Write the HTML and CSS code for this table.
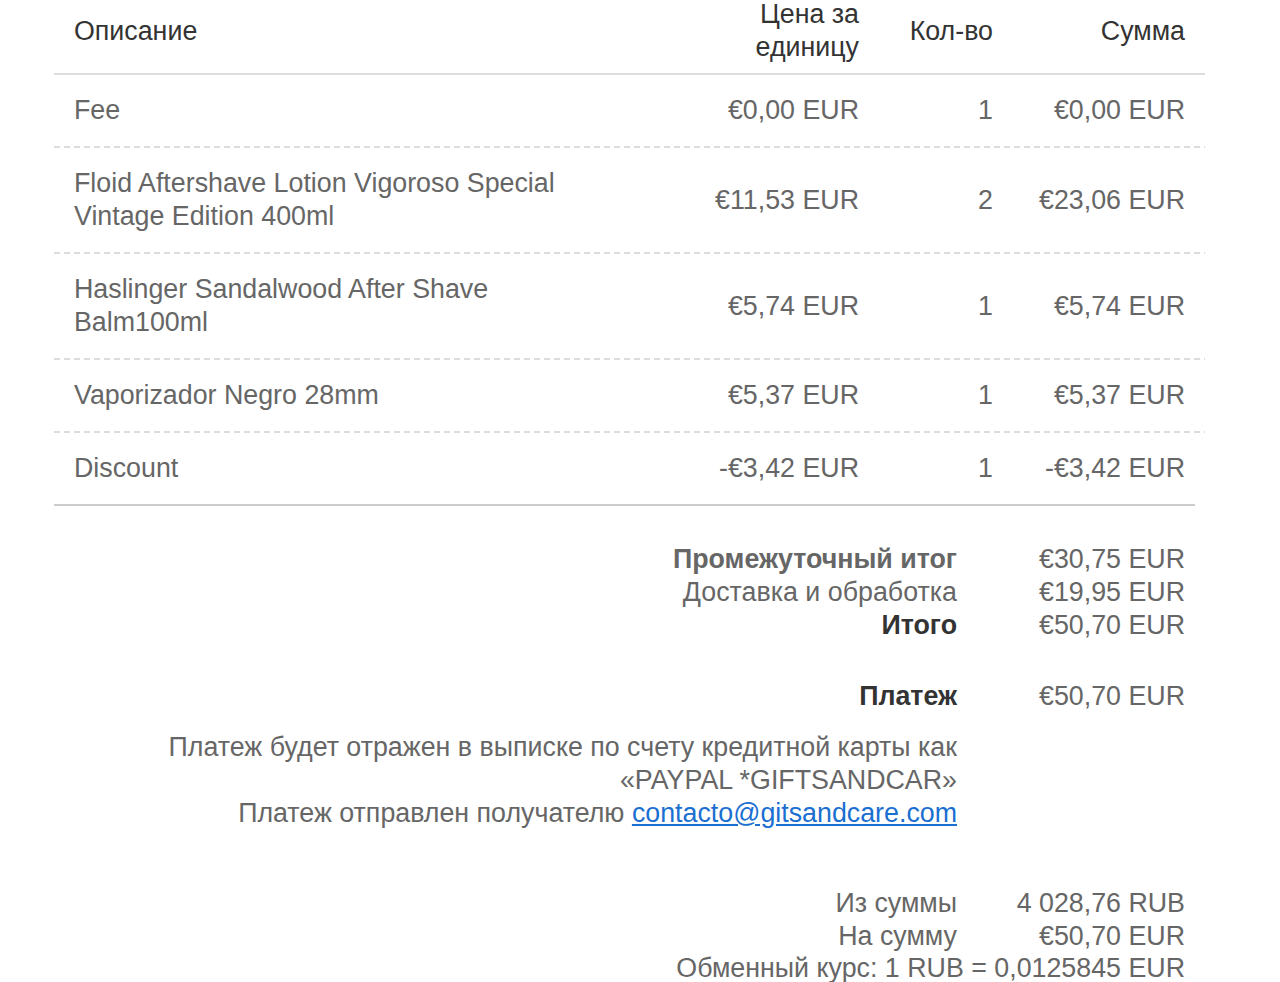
FILE: index.html
```html
<!DOCTYPE html>
<html lang="ru">
<head>
<meta charset="utf-8">
<title>Детали платежа</title>
<link rel="stylesheet" href="styles.css">
</head>
<body>
<div class="invoice">
  <div class="items">
    <div class="row head">
      <div class="c desc">Описание</div>
      <div class="c price">Цена за<br>единицу</div>
      <div class="c qty">Кол-во</div>
      <div class="c sum">Сумма</div>
    </div>
    <div class="row first">
      <div class="c desc">Fee</div>
      <div class="c price">€0,00 EUR</div>
      <div class="c qty">1</div>
      <div class="c sum">€0,00 EUR</div>
    </div>
    <div class="row">
      <div class="c desc">Floid Aftershave Lotion Vigoroso Special Vintage Edition 400ml</div>
      <div class="c price">€11,53 EUR</div>
      <div class="c qty">2</div>
      <div class="c sum">€23,06 EUR</div>
    </div>
    <div class="row">
      <div class="c desc">Haslinger Sandalwood After Shave Balm100ml</div>
      <div class="c price">€5,74 EUR</div>
      <div class="c qty">1</div>
      <div class="c sum">€5,74 EUR</div>
    </div>
    <div class="row">
      <div class="c desc">Vaporizador Negro 28mm</div>
      <div class="c price">€5,37 EUR</div>
      <div class="c qty">1</div>
      <div class="c sum">€5,37 EUR</div>
    </div>
    <div class="row">
      <div class="c desc">Discount</div>
      <div class="c price">-€3,42 EUR</div>
      <div class="c qty">1</div>
      <div class="c sum">-€3,42 EUR</div>
    </div>
  </div>
  <div class="rule"></div>

  <div class="totals">
    <div class="lbl bold-soft">Промежуточный итог</div>
    <div class="val">€30,75 EUR</div>
    <div class="lbl">Доставка и обработка</div>
    <div class="val">€19,95 EUR</div>
    <div class="lbl bold">Итого</div>
    <div class="val">€50,70 EUR</div>

    <div class="lbl bold gap-payment">Платеж</div>
    <div class="val gap-payment">€50,70 EUR</div>

    <div class="note">Платеж будет отражен в выписке по счету кредитной карты как<br>«PAYPAL *GIFTSANDCAR»<br>Платеж отправлен получателю <a href="#" class="mail">contacto@gitsandcare.com</a></div>

    <div class="lbl gap-conv">Из суммы</div>
    <div class="val gap-conv">4 028,76 RUB</div>
    <div class="lbl">На сумму</div>
    <div class="val">€50,70 EUR</div>
    <div class="rate">Обменный курс: 1 RUB = 0,0125845 EUR</div>
  </div>
</div>
</body>
</html>
```

FILE: styles.css
```css
html, body {
  margin: 0;
  padding: 0;
  background: #ffffff;
}

body {
  font-family: "Liberation Sans", Arial, sans-serif;
  font-size: 26.8px;
  line-height: 33px;
  color: #666666;
  overflow: hidden;
}

.invoice {
  margin-left: 54px;
  width: 1151px;
  margin-top: -2px;
}

.row {
  display: grid;
  grid-template-columns: 1fr 240px 134px 192px;
  align-items: center;
  padding: 19px 20px 19px;
  background-image: repeating-linear-gradient(to right, #dcdcdc 0 6px, transparent 6px 10px);
  background-size: 100% 2px;
  background-repeat: no-repeat;
  background-position: 0 0;
  border-top: 2px solid transparent;
  background-origin: border-box;
}

.row.head {
  padding: 0 20px 9px;
  color: #333333;
  background: none;
  border-top: 0;
  border-bottom: 2px solid #dddddd;
}

.row.first {
  background: none;
  border-top: 0;
}

.c.desc {
  text-align: left;
  padding-right: 30px;
}

.c.price,
.c.qty,
.c.sum {
  text-align: right;
}

.rule {
  height: 2px;
  background: #cccccc;
  margin-right: 10px;
}

.totals {
  display: grid;
  grid-template-columns: 1fr 228px;
  padding: 37px 20px 0;
}

.lbl {
  grid-column: 1;
  text-align: right;
}

.val {
  grid-column: 2;
  text-align: right;
}

.bold {
  font-weight: bold;
  color: #333333;
}

.bold-soft {
  font-weight: bold;
  color: #666666;
}

.gap-payment {
  margin-top: 38px;
}

.note {
  grid-column: 1 / 3;
  padding-right: 228px;
  text-align: right;
  margin-top: 18px;
}

.mail {
  color: #1a6fd1;
  text-decoration: underline;
}

.gap-conv {
  margin-top: 57px;
}

.rate {
  grid-column: 1 / 3;
  text-align: right;
  margin-top: -1px;
}
```
